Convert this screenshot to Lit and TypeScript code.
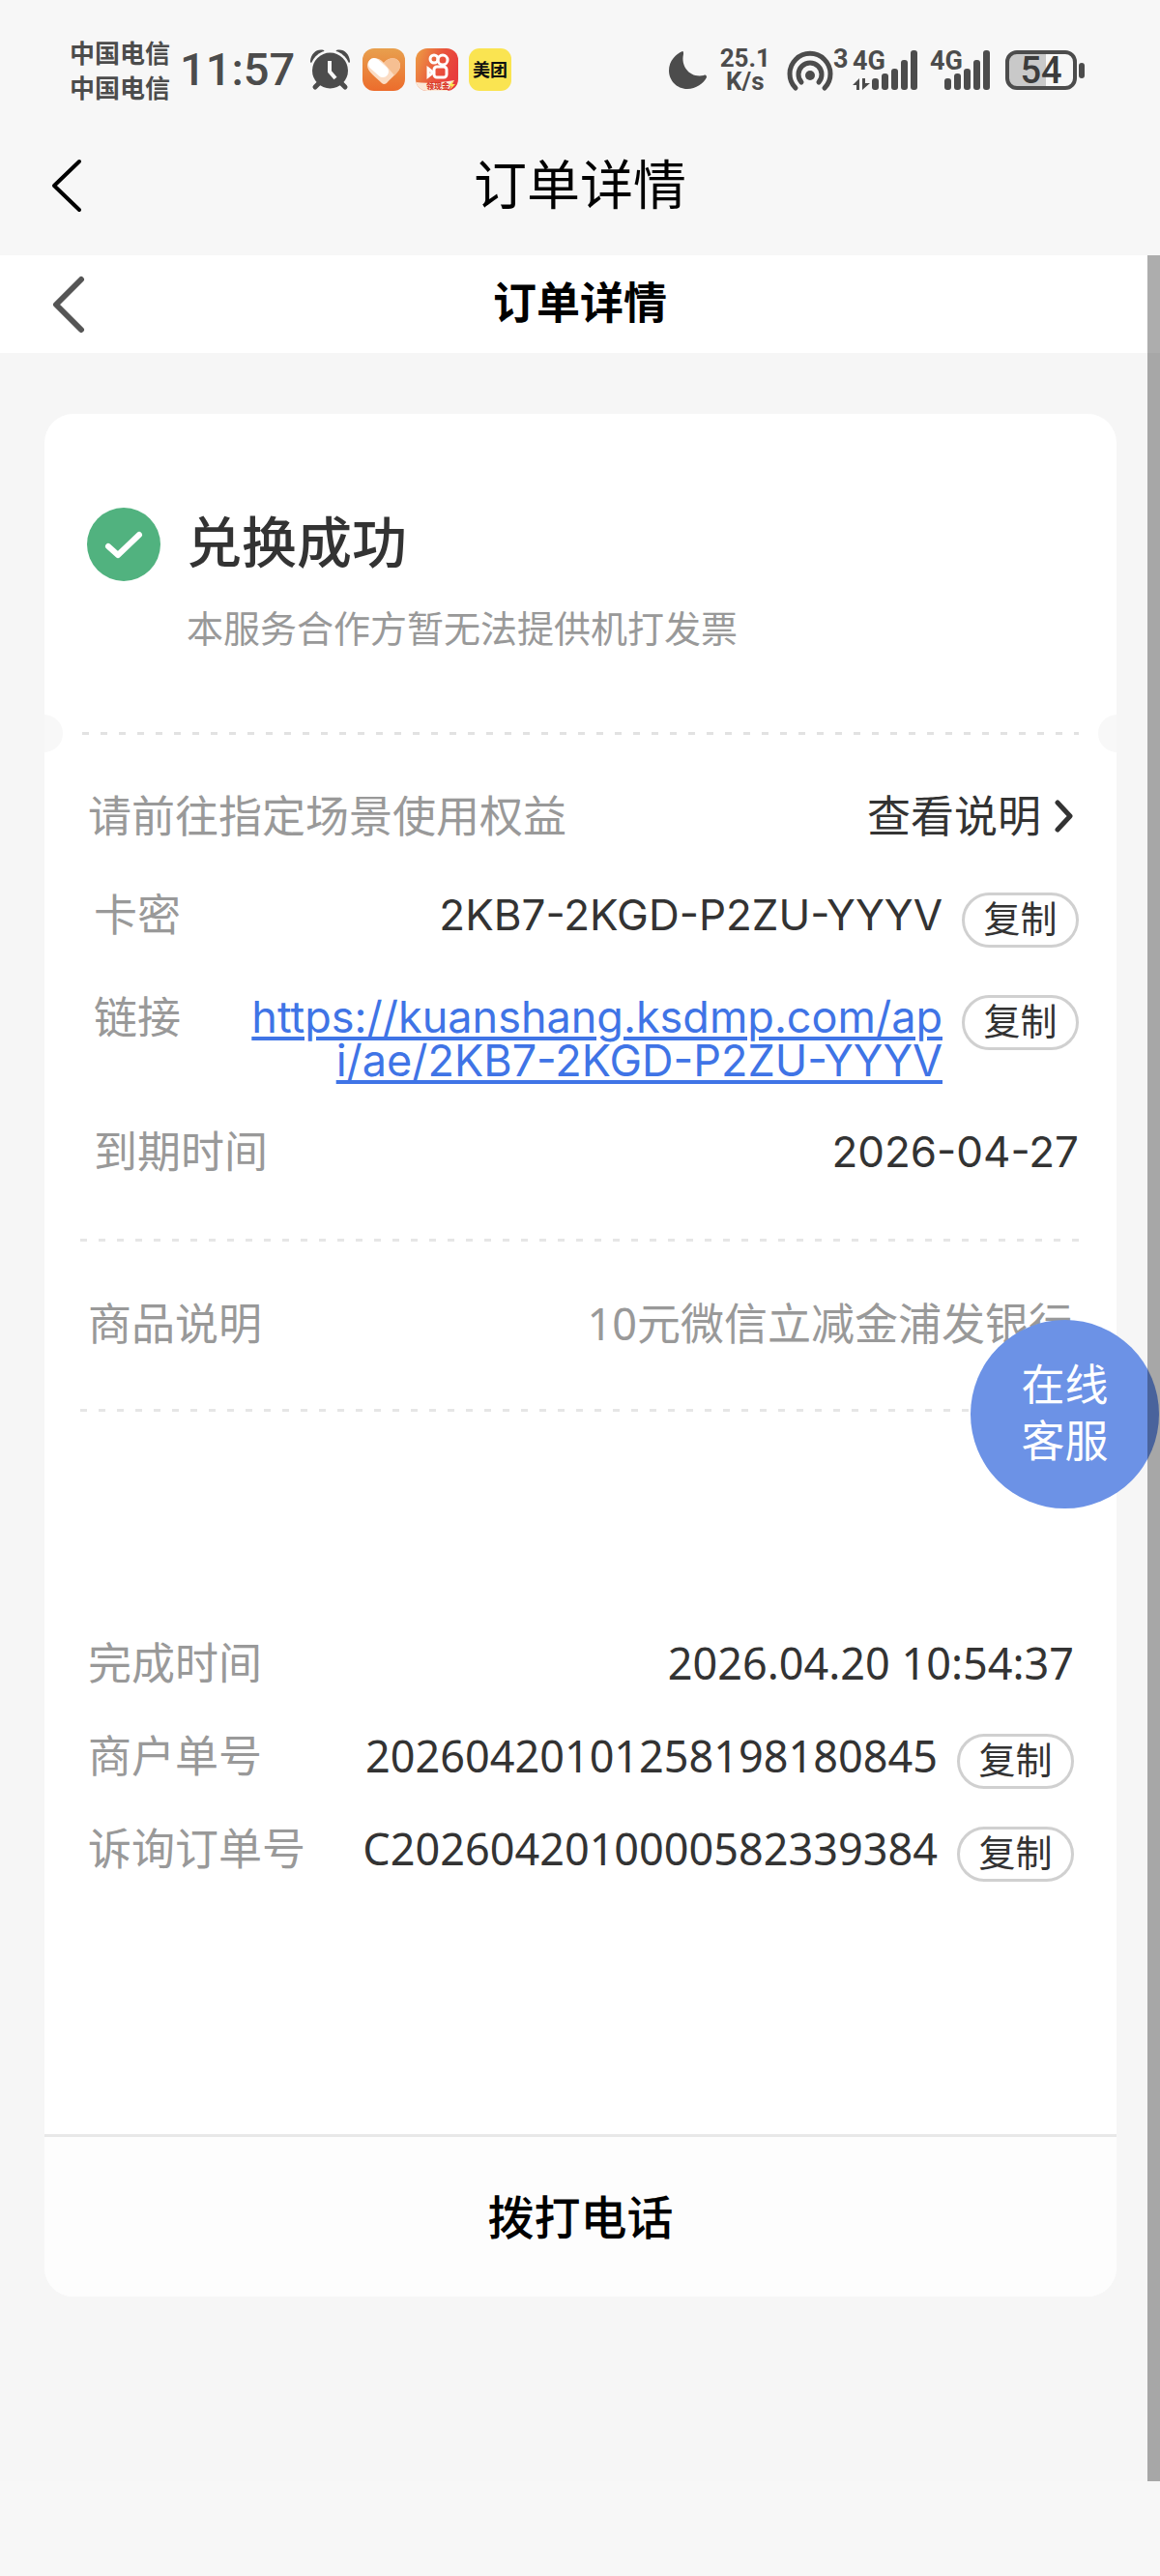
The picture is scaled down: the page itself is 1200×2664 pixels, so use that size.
import { LitElement, html, css, svg } from "lit";
import { customElement } from "lit/decorators.js";

const bars = (x: number) => svg`
  <g fill="#4c4c4c">
    <rect x=${x} y="29" width="7" height="12" rx="3"/>
    <rect x=${x + 10} y="24" width="7" height="17" rx="3"/>
    <rect x=${x + 20} y="19" width="7" height="22" rx="3"/>
    <rect x=${x + 30} y="10" width="7" height="31" rx="3"/>
    <rect x=${x + 40} y="0" width="7" height="41" rx="3"/>
  </g>`;

@customElement("status-bar")
export class StatusBar extends LitElement {
  static styles = css`
    :host { display: block; color: #4c4c4c; font-family: Roboto, "Noto Sans CJK SC", sans-serif; }
    .bar { display: flex; justify-content: space-between; align-items: center; height: 72px; padding: 36px 77px 20px 72px; }
    .side { display: flex; align-items: center; }
    .carrier { font: 700 26px/36px "Noto Sans CJK SC", sans-serif; }
    .time { font-size: 47px; line-height: 56px; font-weight: 500; margin: 0 16px 0 10px; }
    .apps { display: flex; gap: 11px; align-items: center; margin-left: 13px; }
    .rate { font-size: 26px; line-height: 24px; font-weight: 700; text-align: center; margin: 0 17px 0 14px; }
    svg { display: block; overflow: visible; }
    .signal { margin-right: 16px; }
    .g { font: 700 27px Roboto, sans-serif; }
    .pct { font: 500 38px Roboto, sans-serif; }
    .meituan { font: 700 18px "Noto Sans CJK SC", sans-serif; }
    .cash { font: 900 8px "Noto Sans CJK SC", sans-serif; }
  `;
  render() {
    return html`
      <div class="bar">
        <div class="side">
          <div class="carrier"><div>中国电信</div><div>中国电信</div></div>
          <div class="time">11:57</div>
          <svg width="41" height="42" viewBox="0 0 41 42" aria-hidden="true">
            <path d="M0 12C1 4 7 -1 14 1L16 5L5 15C1 15 0 14 0 12ZM41 12C40 4 34 -1 27 1L25 5L36 15C40 15 41 14 41 12Z" fill="#4c4c4c"/>
            <circle cx="20.500" cy="22" r="21" fill="#f7f7f7"/>
            <path d="M9 35L5 39M32 35L36 39" stroke="#4c4c4c" stroke-width="5" stroke-linecap="round"/>
            <circle cx="20.500" cy="22" r="18.500" fill="#4c4c4c"/>
            <path d="M20 12V23L26 30" stroke="#f7f7f7" stroke-width="4" fill="none"/>
          </svg>
          <div class="apps">
            <svg width="44" height="44" viewBox="0 0 44 44" aria-hidden="true">
              <defs><linearGradient id="o" x1="0" y1="0" x2="0" y2="1"><stop offset="0" stop-color="#e8a04e"/><stop offset="1" stop-color="#ec6c2c"/></linearGradient></defs>
              <rect width="44" height="44" rx="12" fill="url(#o)"/>
              <path d="M20 36C14 30 5 24 5 18C5 10 15 7 22 15C29 7 39 10 39 18C39 24 30 30 25 36Q22 38 20 36Z" fill="#fbdcc4"/>
              <path d="M22 15C29 7 39 10 39 18C39 22 36 25 33 28Z" fill="#f6bf92"/>
              <path d="M12 16L21 24" stroke="#fff" stroke-width="12" stroke-linecap="round"/>
            </svg>
            <svg width="44" height="44" viewBox="0 0 44 44" aria-hidden="true">
              <defs>
                <linearGradient id="k" x1="0" y1="0" x2="1" y2="0.400"><stop offset="0" stop-color="#eda045"/><stop offset="0.600" stop-color="#e9543c"/><stop offset="1" stop-color="#e83c3e"/></linearGradient>
                <clipPath id="c"><rect width="44" height="44" rx="12"/></clipPath>
              </defs>
              <g clip-path="url(#c)">
                <rect width="44" height="44" fill="url(#k)"/>
                <g fill="none" stroke="#fff" stroke-width="3"><circle cx="19" cy="11" r="4"/><circle cx="28" cy="12" r="5"/><rect x="19" y="19" width="13" height="11" rx="3"/><path d="M13 21L18 25L13 29Z"/></g>
                <path d="M0 35Q16 37 40 33L33 44H0Z" fill="#fbe9d8"/>
              </g>
              <text class="cash" x="11" y="42" fill="#d93a2a">领现金</text>
              <path d="M39 33L34 39H37L35 43L41 37H38Z" fill="#fbe451"/>
            </svg>
            <svg width="44" height="44" viewBox="0 0 44 44" aria-hidden="true">
              <rect width="44" height="44" rx="11" fill="#fae451"/>
              <text class="meituan" x="22" y="29" text-anchor="middle" fill="#111">美团</text>
            </svg>
          </div>
        </div>
        <div class="side">
          <svg width="39" height="39" viewBox="0 0 39 39" aria-hidden="true"><path d="M14 0C7 3 0 10 0 20C0 30 8 39 19 39C28 39 36 33 39 27C39 25 38 24 36 25C22 28 12 16 15 3C15 1 15 0 14 0Z" fill="#4c4c4c"/></svg>
          <div class="rate"><div>25.1</div><div>K/s</div></div>
          <svg class="signal" width="132" height="60" viewBox="0 -8 132 60" aria-hidden="true">
            <g fill="none" stroke="#4c4c4c" stroke-width="5" stroke-linecap="round"><path d="M9 41A21 21 0 1 1 39 41"/><path d="M15 35A12 12 0 1 1 33 35"/></g>
            <circle cx="24" cy="28" r="5" fill="#4c4c4c"/>
            <text class="g" x="48" y="20" fill="#4c4c4c">3</text>
            <text class="g" x="68" y="22" fill="#4c4c4c">4G</text>
            <path d="M68 38L75 31V43H72V38ZM78 31H81V36H86L78 43Z" fill="#4c4c4c"/>
            <g transform="translate(0 2)">${bars(88)}</g>
          </svg>
          <svg class="signal" width="62" height="60" viewBox="0 -8 62 60" aria-hidden="true">
            <text class="g" x="0" y="22" fill="#4c4c4c">4G</text>
            <g transform="translate(0 2)">${bars(15)}</g>
          </svg>
          <svg width="83" height="41" viewBox="0 0 83 41" aria-hidden="true">
            <path d="M12 2H42V39H12Q2 39 2 29V12Q2 2 12 2Z" fill="#c9c9c9"/>
            <rect x="2" y="2" width="70" height="37" rx="10" fill="none" stroke="#4c4c4c" stroke-width="4"/>
            <rect x="76" y="13" width="6" height="16" rx="3" fill="#4c4c4c"/>
            <text class="pct" x="37" y="34" text-anchor="middle" fill="#3c3c3c">54</text>
          </svg>
        </div>
      </div>`;
  }
}

@customElement("app-root")
export class AppRoot extends LitElement {
  static styles = css`
    :host { display: block; position: relative; min-height: 100vh; background: #f7f7f7; color: #333; font: 45px/46px "Noto Sans", "Noto Sans CJK SC", sans-serif; }
    * { box-sizing: border-box; }
    h1, h2, h3, p, dl, dd, dt { margin: 0; font-weight: 400; }
    button { font: inherit; color: inherit; border: 0; background: none; padding: 0; }
    svg { display: block; }
    .nav { display: grid; grid-template-columns: 1fr auto 1fr; align-items: center; padding: 0 52px; color: #000; }
    .outer { height: 136px; padding-bottom: 8px; }
    .outer h1 { font-size: 55px; line-height: 60px; padding-bottom: 4px; }
    .inner { height: 101px; background: #fff; }
    .inner h2 { font-size: 45px; font-weight: 700; padding-bottom: 4px; }
    .page { position: relative; }
    .content { padding: 63px 45px 191px 46px; background: #f6f6f6; }
    .card { background: #fff; border-radius: 30px; overflow: hidden; }
    .head { display: grid; grid-template-columns: 77px 1fr; column-gap: 26px; padding: 97px 44px 67px; }
    .head h3 { font-size: 57px; line-height: 70px; font-weight: 500; }
    .head p { grid-column: 2; font-size: 38px; line-height: 46px; color: #999; margin-top: 24px; }
    .tear { display: flex; align-items: center; justify-content: space-between; gap: 20px; margin: 0 -20px; }
    .tear i { width: 39px; height: 39px; border-radius: 50%; background: #f8f8f8; }
    .dash { flex: 1; height: 3px; background: repeating-linear-gradient(90deg, #e2e2e2 0 7px, transparent 7px 19px); }
    .rule { height: 3px; margin: 0 37px; background: repeating-linear-gradient(90deg, #e6e6e6 0 7px, transparent 7px 19px); }
    .row { display: flex; justify-content: space-between; align-items: flex-start; }
    dt, .muted { color: #999; }
    dd { display: flex; gap: 20px; text-align: right; min-width: 0; }
    .code { font-family: Inter, sans-serif; font-size: 44px; }
    .guide { padding: 43px 44px 56px 45px; }
    .more { display: flex; align-items: center; gap: 14px; }
    .codes { padding: 0 39px 67px 51px; display: grid; gap: 49px; }
    .link { color: #3f74e6; font-family: Inter, sans-serif; line-height: 45px; white-space: nowrap; text-decoration: underline; text-decoration-thickness: 4px; text-underline-offset: 4px; }
    .copy { flex: none; width: 121px; height: 57px; border: 3px solid #d0d0d0; border-radius: 29px; font-size: 38px; line-height: 46px; padding-bottom: 5px; }
    .goods { padding: 62px 46px 65px 45px; }
    .orders { padding: 237px 44px 261px 45px; display: grid; gap: 39px; }
    .orders .row { min-height: 57px; }
    .call { display: block; width: 100%; height: 168px; border-top: 3px solid #e8e8e8; background: #fdfdfd; font-size: 48px; font-weight: 500; color: #000; }
    .service { position: absolute; right: 1px; top: 1101px; width: 195px; height: 195px; padding-bottom: 3px; border-radius: 50%; background: #6c92e6; color: #fff; line-height: 58px; }
    .thumb { position: absolute; right: 0; top: 0; width: 13px; height: 2302px; background: rgba(0, 0, 0, 0.32); }
  `;

  private copy(text: string) {
    return html`<button class="copy" @click=${() => navigator.clipboard?.writeText(text)}>复制</button>`;
  }

  render() {
    const code = "2KB7-2KGD-P2ZU-YYYV";
    const url = "https://kuanshang.ksdmp.com/api/ae/" + code;
    const merchant = "20260420101258198180845";
    const inquiry = "C2026042010000582339384";
    return html`
      <status-bar></status-bar>
      <header class="nav outer">
        <button aria-label="返回"><svg width="34" height="58" viewBox="0 0 34 58"><path d="M30 4L4 29L30 54" fill="none" stroke="#000" stroke-width="4" stroke-linecap="round" stroke-linejoin="round"/></svg></button>
        <h1>订单详情</h1>
      </header>
      <main class="page">
        <div class="nav inner">
          <button aria-label="返回"><svg width="38" height="60" viewBox="0 0 38 60"><path d="M32 4L6 30L32 56" fill="none" stroke="#555" stroke-width="6" stroke-linecap="round" stroke-linejoin="round"/></svg></button>
          <h2>订单详情</h2>
        </div>
        <div class="content">
          <section class="card">
            <div class="head">
              <svg width="77" height="77" viewBox="0 0 77 77" aria-hidden="true"><circle cx="38" cy="38" r="38" fill="#51b27f"/><path d="M22 40L32 49L54 28" fill="none" stroke="#fff" stroke-width="6" stroke-linecap="round" stroke-linejoin="round"/></svg>
              <h3>兑换成功</h3>
              <p>本服务合作方暂无法提供机打发票</p>
            </div>
            <div class="tear"><i></i><span class="dash"></span><i></i></div>
            <div class="row guide">
              <span class="muted">请前往指定场景使用权益</span>
              <button class="more">查看说明<svg width="20" height="34" viewBox="0 0 20 34" aria-hidden="true"><path d="M3 3L16 17L3 31" fill="none" stroke="#333" stroke-width="5" stroke-linecap="round" stroke-linejoin="round"/></svg></button>
            </div>
            <dl class="codes">
              <div class="row"><dt>卡密</dt><dd><span class="code">${code}</span>${this.copy(code)}</dd></div>
              <div class="row"><dt>链接</dt><dd><a class="link" href=${url}>${url.slice(0, 30)}<br>${url.slice(30)}</a>${this.copy(url)}</dd></div>
              <div class="row"><dt>到期时间</dt><dd><span class="code">2026-04-27</span></dd></div>
            </dl>
            <div class="rule"></div>
            <dl class="goods"><div class="row"><dt>商品说明</dt><dd class="muted">10元微信立减金浦发银行</dd></div></dl>
            <div class="rule"></div>
            <dl class="orders">
              <div class="row"><dt>完成时间</dt><dd>2026.04.20 10:54:37</dd></div>
              <div class="row"><dt>商户单号</dt><dd><span>${merchant}</span>${this.copy(merchant)}</dd></div>
              <div class="row"><dt>诉询订单号</dt><dd><span>${inquiry}</span>${this.copy(inquiry)}</dd></div>
            </dl>
            <button class="call">拨打电话</button>
          </section>
        </div>
        <button class="service">在线<br>客服</button>
        <div class="thumb"></div>
      </main>`;
  }
}
